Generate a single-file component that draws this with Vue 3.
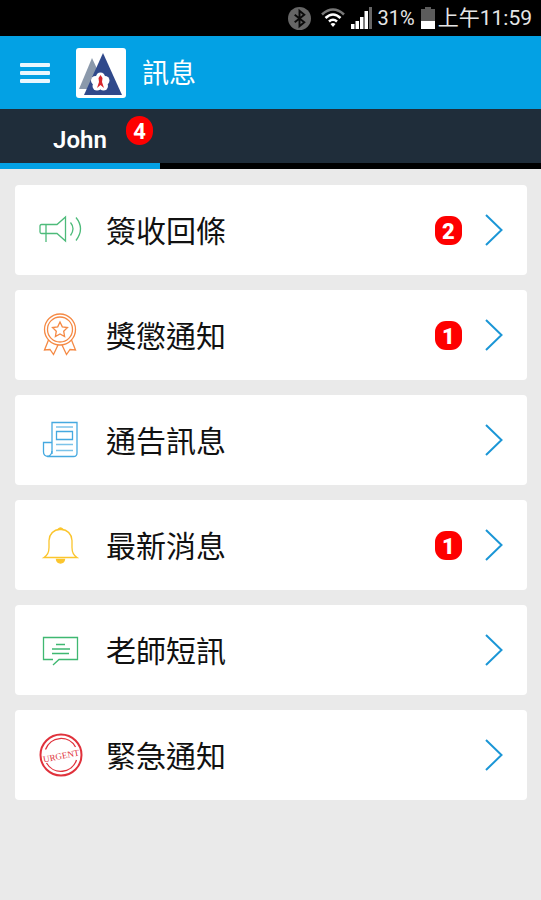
<template>
  <div class="app">
    <div class="status-bar">
      <svg class="bt" viewBox="0 0 24 24">
        <circle cx="12" cy="12" r="12" fill="#666" />
        <path d="M7 8l10 8-5 4V4l5 4-10 8" fill="none" stroke="#0a0a0a" stroke-width="2" />
      </svg>
      <svg class="wifi" viewBox="0 0 24 20">
        <path d="M1 6.500Q12-3.500 23 6.500" fill="none" stroke="#777" stroke-width="2.600" />
        <path d="M4.500 10Q12 3 19.500 10M8 13.500Q12 10 16 13.500" fill="none" stroke="#fff" stroke-width="2.600" />
        <path d="M9.500 16L12 19l2.500-3Q12 14 9.500 16z" fill="#fff" />
      </svg>
      <svg class="signal" viewBox="0 0 22 22">
        <path d="M0 17h3.500v5H0zM4.500 14H8v8H4.500zM9 10h3.500v12H9zM13.500 4H17v18h-3.500z" fill="#fff" />
        <path d="M18 0h3v22h-3z" fill="#666" />
      </svg>
      <span class="percent">31%</span>
      <svg class="battery" viewBox="0 0 14 22">
        <path d="M4 0h6v2h4v12H0V2h4z" fill="#5c5c5c" />
        <path d="M0 14h14v8H0z" fill="#fff" />
      </svg>
      <span class="clock">上午11:59</span>
    </div>

    <header class="header">
      <button class="menu-btn" type="button" aria-label="選單">
        <span></span>
        <span></span>
        <span></span>
      </button>
      <svg class="logo" viewBox="0 0 50 50">
        <rect width="50" height="50" rx="3" fill="#fff" />
        <path d="M16 10L3 41h14l6-16z" fill="#8b99ab" />
        <path d="M27 5L8 47h38z" fill="#30498b" />
        <g fill="#fff">
          <circle cx="24.500" cy="29" r="4.500" />
          <circle cx="29" cy="32.500" r="4.500" />
          <circle cx="27.500" cy="38" r="4.500" />
          <circle cx="21" cy="38" r="4.500" />
          <circle cx="19.500" cy="32.500" r="4.500" />
        </g>
        <path d="M24.500 27l2 3-.5 4 2 6-3.500-3-3.500 3 2-6-.5-4z" fill="#d8262c" />
      </svg>
      <h1>訊息</h1>
    </header>

    <nav class="tabs">
      <button class="tab active" type="button">
        John
        <span class="badge tab-badge">4</span>
      </button>
    </nav>

    <main class="list">
      <a v-for="item in items" :key="item.icon" class="item" href="#" @click.prevent>
        <svg class="icon" :class="item.icon" viewBox="0 0 46 46">
          <template v-if="item.icon === 'horn'">
            <path d="M19 17.500H3.500q-1.500 0-1.500 1.500v6q0 1.500 1.500 1.500H19l8.500 7.500V10zM8 17.500V35" />
            <path d="M32.500 15.500q5 6 0 13M38 10.500q9 11 0 23" />
          </template>
          <template v-else-if="item.icon === 'award'">
            <circle cx="22" cy="17.500" r="15.500" />
            <circle cx="22" cy="17.500" r="12.500" />
            <path d="M22 10l2.300 4.800 5.200.7-3.800 3.700.9 5.300-4.600-2.500-4.600 2.500.9-5.300-3.800-3.700 5.200-.7z" />
            <path d="M10.500 28L6.500 38l5.500-.5 3.500 5 4.500-9.500M33.500 28l4 10-5.500-.5-3.500 5L24 33" />
          </template>
          <template v-else-if="item.icon === 'news'">
            <path d="M14 37V5.500h25V36q0 3.500-3.500 3.500H10Q5.500 39 5.500 35V25.500H14" />
            <path d="M14 34q-.5 5-5 5.500M18.500 14.500h16v8h-16z" />
            <path class="pale" d="M18 10h17M18 27.500h17M18 33.500h17" />
          </template>
          <template v-else-if="item.icon === 'bell'">
            <path d="M6 35.500q5-3 5-10v-7Q11.500 8.500 22.500 7 33.500 8.500 34 18.500v7q0 7 5 10z" />
            <path class="solid" d="M20 7.500q2.500-3 5 0zM18.500 37.500h8q-.5 3.500-4 3.500t-4-3.500z" />
          </template>
          <template v-else-if="item.icon === 'message'">
            <path d="M15 32.500H5.500v-22h34v22H21l-6 5.500" />
            <path d="M18 17.500h9M14 22h18M14 26.500h17" />
          </template>
          <template v-else>
            <circle class="ring" cx="23" cy="23" r="20.500" />
            <path d="M7.500 17.500A16.500 16.500 0 0 1 37.500 15M8.500 31A16.500 16.500 0 0 0 38.500 28" />
            <text x="23" y="27" transform="rotate(-11 23 23)">URGENT</text>
          </template>
        </svg>
        <span class="title">{{ item.title }}</span>
        <span v-if="item.count" class="badge">{{ item.count }}</span>
        <svg class="arrow" viewBox="0 0 18 32">
          <path d="M1 1l15.500 15L1 31" />
        </svg>
      </a>
    </main>
  </div>
</template>

<script setup>
const items = [
  { icon: "horn", title: "簽收回條", count: 2 },
  { icon: "award", title: "獎懲通知", count: 1 },
  { icon: "news", title: "通告訊息", count: 0 },
  { icon: "bell", title: "最新消息", count: 1 },
  { icon: "message", title: "老師短訊", count: 0 },
  { icon: "urgent", title: "緊急通知", count: 0 },
];
</script>

<style>
body {
  background: #eaeaea;
}
</style>

<style scoped>
.app {
  min-height: 100vh;
  background: #eaeaea;
  font-family: Roboto, "Noto Sans CJK TC", sans-serif;
}

/* STATUS BAR */
.status-bar {
  height: 36px;
  padding-right: 9px;
  display: flex;
  align-items: center;
  justify-content: flex-end;
  background: #000;
  color: #e6e6e6;
  font-size: 20px;
  line-height: 38px;
}
.bt {
  width: 23px;
  height: 23px;
  margin-right: 10px;
}
.wifi {
  width: 24px;
  height: 20px;
  margin-right: 6px;
}
.signal {
  width: 22px;
  height: 22px;
  margin-right: 5px;
}
.percent {
  margin-right: 6px;
}
.battery {
  width: 14px;
  height: 22px;
  margin-right: 3px;
}
.clock {
  font-size: 21px;
}

/* HEADER */
.header {
  height: 73px;
  padding: 0 20px;
  display: flex;
  align-items: center;
  background: #03a1e4;
}
.menu-btn {
  width: 30px;
  padding: 0;
  margin-right: 26px;
  display: flex;
  flex-direction: column;
  gap: 4px;
  border: none;
  background: none;
  cursor: pointer;
}
.menu-btn span {
  height: 4px;
  border-radius: 1px;
  background: #eaf7fe;
}
.logo {
  width: 50px;
  height: 50px;
  margin-right: 16px;
}
h1 {
  margin: 0;
  padding-top: 3px;
  color: #fff;
  font-size: 27px;
  font-weight: 400;
  line-height: 40px;
}

/* TABS */
.tabs {
  height: 60px;
  display: flex;
  background: linear-gradient(#1f2d3a 54px, #000 54px);
}
.tab {
  position: relative;
  width: 160px;
  padding: 8px 0 0;
  border: none;
  border-bottom: 6px solid #03a1e4;
  background: #1f2d3a;
  color: #fff;
  font-family: inherit;
  font-size: 24px;
  font-weight: 600;
  cursor: pointer;
}

/* BADGE */
.badge {
  width: 27px;
  height: 29px;
  border-radius: 11px;
  background: #fe0000;
  color: #fff;
  font-size: 22px;
  font-weight: 900;
  line-height: 31px;
  text-align: center;
}
.tab-badge {
  position: absolute;
  top: 7px;
  right: 7px;
  border-radius: 14px;
  font-weight: 700;
}

/* LIST */
.list {
  padding: 16px 14px 16px 15px;
  display: flex;
  flex-direction: column;
  gap: 15px;
}
.item {
  height: 90px;
  padding: 0 24px 0 23px;
  display: flex;
  align-items: center;
  border-radius: 4px;
  background: #fff;
  color: #111;
  text-decoration: none;
}
.title {
  flex: 1;
  margin-left: 22px;
  padding-top: 3px;
  font-size: 30px;
  line-height: 44px;
}
.arrow {
  width: 18px;
  height: 32px;
  margin-left: 23px;
  fill: none;
  stroke: #1b96d6;
  stroke-width: 2;
}

/* ICONS */
.icon {
  width: 46px;
  height: 46px;
  fill: none;
  stroke: currentColor;
  stroke-width: 1.3;
}
.horn {
  color: #4dbb7a;
}
.award {
  color: #f58a45;
}
.news {
  color: #45a9e0;
}
.bell {
  color: #fbc52d;
}
.message {
  color: #3fb871;
}
.urgent {
  color: #e0323c;
}
.solid {
  fill: currentColor;
}
.pale {
  opacity: 0.7;
}
.ring {
  stroke-width: 2;
}
.urgent text {
  fill: currentColor;
  stroke: none;
  font-family: "Liberation Serif", serif;
  font-size: 9px;
  text-anchor: middle;
}
</style>
